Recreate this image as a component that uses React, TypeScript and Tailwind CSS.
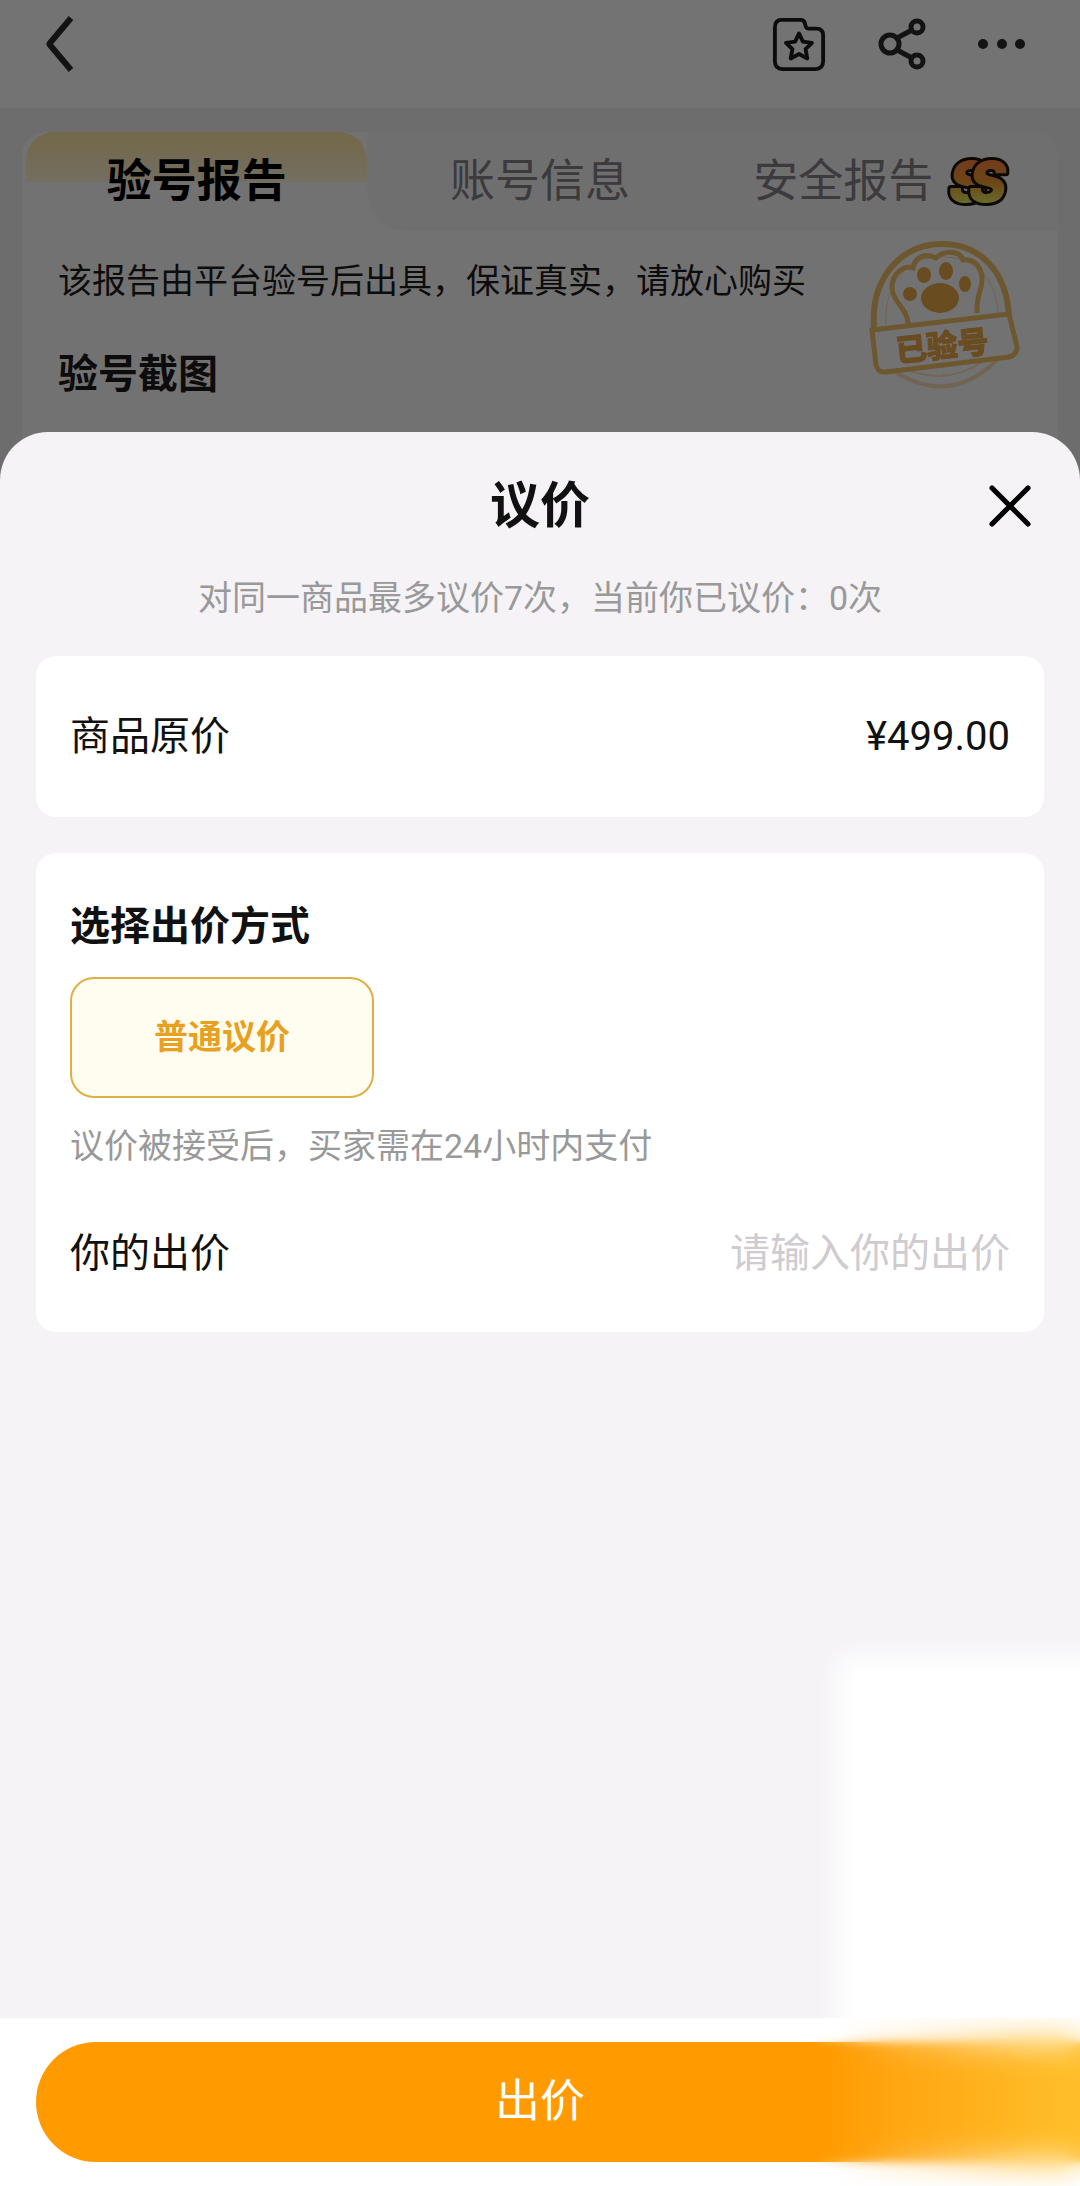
import React, { useState } from 'react';
import { X } from 'lucide-react';

function BackIcon() {
  return (
    <svg width="28" height="56" viewBox="0 0 28 56" fill="none" stroke="#2a2a2a" strokeWidth="6" strokeLinejoin="round">
      <path d="M25 2 L4 27 Q3 28 4 29 L25 54" />
    </svg>
  );
}

function FolderStarIcon() {
  return (
    <svg width="54" height="54" viewBox="0 0 56 56" fill="none" stroke="#1c1c1c" strokeWidth="4" strokeLinejoin="round">
      <path d="M10 3 H30 Q33 3 34 6 L35 10 Q36 12 38 12 H46 Q53 12 53 19 V46 Q53 54 45 54 H11 Q3 54 3 46 V11 Q3 3 10 3 Z" />
      <path d="M28 17 L32 25.6 L41.5 26.8 L34.8 33.4 L36.6 43 L28 38.4 L19.4 43 L21.2 33.4 L14.5 26.8 L24 25.6 Z" />
    </svg>
  );
}

function ShareIcon() {
  return (
    <svg width="48" height="52" viewBox="0 0 48 52" fill="none" stroke="#2a2a2a" strokeWidth="5">
      <circle cx="12" cy="26" r="9" />
      <circle cx="39" cy="9" r="6" />
      <circle cx="39" cy="43" r="6" />
      <path d="M19 20 L34 12 M19 32 L34 40" />
    </svg>
  );
}

function MoreIcon() {
  return (
    <svg width="48" height="12" viewBox="0 0 48 12" fill="#2a2a2a">
      <circle cx="5" cy="6" r="5" />
      <circle cx="24" cy="6" r="5" />
      <circle cx="42" cy="6" r="5" />
    </svg>
  );
}

function GradeBadge() {
  return (
    <svg
      width="60"
      height="52"
      viewBox="0 0 60 52"
      className="overflow-visible"
      fontFamily="Inter, 'Liberation Sans', sans-serif"
      fontWeight="900"
      fontStyle="italic"
      fontSize="56"
      stroke="#1c1408"
      strokeWidth="6"
      strokeLinejoin="round"
      paintOrder="stroke"
    >
      <defs>
        <linearGradient id="grade" gradientUnits="userSpaceOnUse" x1="0" y1="4" x2="0" y2="48">
          <stop offset="0" stopColor="#ff8440" />
          <stop offset="0.5" stopColor="#f09a32" />
          <stop offset="1" stopColor="#e6ee62" />
        </linearGradient>
      </defs>
      <text x="0" y="46" fill="url(#grade)">S</text>
      <text x="20" y="46" fill="url(#grade)">S</text>
    </svg>
  );
}

function VerifiedStamp() {
  return (
    <svg width="156" height="160" viewBox="0 0 156 160" fill="none" stroke="#f0b650" opacity="0.85">
      <path d="M8 98 C4 46 36 13 76 13 C114 13 140 40 143 84" strokeWidth="6" />
      <path d="M20 94 C18 50 42 26 76 26 C108 26 130 46 132 82" strokeWidth="1" opacity="0.5" />
      <path d="M28 140 Q84 176 132 128" strokeWidth="4" opacity="0.45" />
      <path d="M42 139 Q82 154 116 131" strokeWidth="2" opacity="0.4" />
      <path d="M42 92 C42 78 25 70 26 54 C27 42 38 34 47 37 C49 25 60 22 70 27 C79 18 94 20 97 29 C110 27 119 40 115 56 C112 66 111 70 111 82" strokeWidth="5" />
      <g fill="#e89a2c" stroke="none">
        <ellipse cx="74" cy="67" rx="19" ry="15" />
        <ellipse cx="44" cy="63" rx="7" ry="7" />
        <ellipse cx="58" cy="44" rx="7" ry="8" />
        <ellipse cx="80" cy="40" rx="7" ry="9" />
        <ellipse cx="99" cy="53" rx="6" ry="8" />
      </g>
      <path d="M6 99 L143 83 L151 116 Q151 124 143 126 L20 141 Q12 142 10 134 Z" strokeWidth="5" />
      <text
        x="31"
        y="131"
        transform="rotate(-6 31 131)"
        fill="#e89a2c"
        stroke="#e89a2c"
        strokeWidth="1"
        fontFamily="'Noto Sans CJK SC', sans-serif"
        fontWeight="900"
        fontSize="31"
      >
        已验号
      </text>
    </svg>
  );
}

function ReportPage() {
  return (
    <div className="min-h-screen bg-[#f2f2f2]">
      <header className="flex h-[108px] items-center justify-between bg-white pb-5 pl-[46px] pr-[54px]">
        <button aria-label="返回">
          <BackIcon />
        </button>
        <div className="flex items-center gap-[52px]">
          <button aria-label="收藏">
            <FolderStarIcon />
          </button>
          <button aria-label="分享">
            <ShareIcon />
          </button>
          <button aria-label="更多">
            <MoreIcon />
          </button>
        </div>
      </header>

      <main className="mx-[22px] mt-6 min-h-96 rounded-t-3xl bg-[#fffcff]">
        <div role="tablist" className="grid h-[99px] grid-cols-3 text-[45px] text-[#858285]">
          <button
            role="tab"
            aria-selected="true"
            className="ml-1 rounded-t-[28px] bg-linear-to-b from-[#ffe6a4] to-[#fff4d4] bg-[length:100%_50px] bg-no-repeat font-bold text-black"
          >
            验号报告
          </button>
          <button role="tab" aria-selected="false" className="rounded-bl-[40px] bg-[#f9f6f9]">
            账号信息
          </button>
          <button role="tab" aria-selected="false" className="flex items-center justify-center gap-4 rounded-tr-3xl bg-[#f9f6f9] pr-2">
            安全报告
            <GradeBadge />
          </button>
        </div>
        <div className="flex items-start justify-between px-9">
          <div>
            <p className="mt-6 text-[34px] leading-[52px] text-[#1c1c1c]">该报告由平台验号后出具，保证真实，请放心购买</p>
            <h2 className="mt-10 text-[40px] font-bold leading-[56px] text-[#1c1c1c]">验号截图</h2>
          </div>
          <VerifiedStamp />
        </div>
      </main>
    </div>
  );
}

function BargainSheet() {
  const [price, setPrice] = useState('');

  return (
    <section
      role="dialog"
      aria-labelledby="bargain-title"
      className="relative mt-[432px] flex flex-1 flex-col overflow-hidden rounded-t-[48px] bg-[#f5f3f6] text-[#111]"
    >
      <div className="grid grid-cols-[1fr_auto_1fr] items-center px-[34px] pt-[38px]">
        <h1 id="bargain-title" className="col-start-2 text-[50px] font-bold leading-[72px]">
          议价
        </h1>
        <button aria-label="关闭" className="justify-self-end">
          <X size={72} strokeWidth={1.7} className="text-black" />
        </button>
      </div>
      <p className="mt-[30px] text-center text-[34px] leading-[52px] text-[#999]">对同一商品最多议价7次，当前你已议价：0次</p>

      <div className="mx-9 mt-8 flex h-[161px] items-center justify-between rounded-[20px] bg-white px-[34px] text-[40px]">
        <span>商品原价</span>
        <span>¥499.00</span>
      </div>

      <div className="mx-9 mt-9 rounded-[20px] bg-white px-[34px] pb-12 pt-11">
        <h2 className="text-[40px] font-bold leading-[60px]">选择出价方式</h2>
        <button className="mt-5 h-[121px] w-[304px] rounded-3xl border-2 border-[#dfae45] bg-[#fffdf0] text-[34px] font-bold text-[#e8a020]">
          普通议价
        </button>
        <p className="mt-[22px] text-[34px] leading-[52px] text-[#999]">议价被接受后，买家需在24小时内支付</p>
        <div className="mt-[52px] flex items-center justify-between text-[40px] leading-[60px]">
          <label htmlFor="price">你的出价</label>
          <input
            id="price"
            value={price}
            onChange={(e) => setPrice(e.target.value)}
            placeholder="请输入你的出价"
            className="min-w-0 flex-1 text-right outline-none placeholder:text-[#cfcbd0]"
          />
        </div>
      </div>

      <div className="relative flex-1">
        <div className="absolute -bottom-10 -right-10 top-[324px] w-[282px] bg-white blur-[12px]" />
      </div>

      <footer className="relative bg-white py-6 pl-9">
        <button className="h-[120px] w-full rounded-l-full bg-linear-to-r from-[#ff9b00] from-75% to-[#ffc02a] pr-9 text-[45px] text-white">
          出价
        </button>
        {/* soft glow that swallows the right end of the button */}
        <div className="pointer-events-none absolute inset-y-0 right-0 w-1/4 backdrop-blur-[4px] [mask-image:linear-gradient(to_right,transparent,black_30%)]" />
        <div className="pointer-events-none absolute inset-y-0 right-0 w-1/4 backdrop-blur-[16px] [mask-image:linear-gradient(to_right,transparent_10%,black_80%)]" />
      </footer>
    </section>
  );
}

export default function App() {
  return (
    <div className="relative font-[Roboto,'Noto_Sans_CJK_SC',sans-serif]">
      <ReportPage />
      <div className="absolute inset-0 flex flex-col bg-black/55">
        <BargainSheet />
      </div>
    </div>
  );
}
